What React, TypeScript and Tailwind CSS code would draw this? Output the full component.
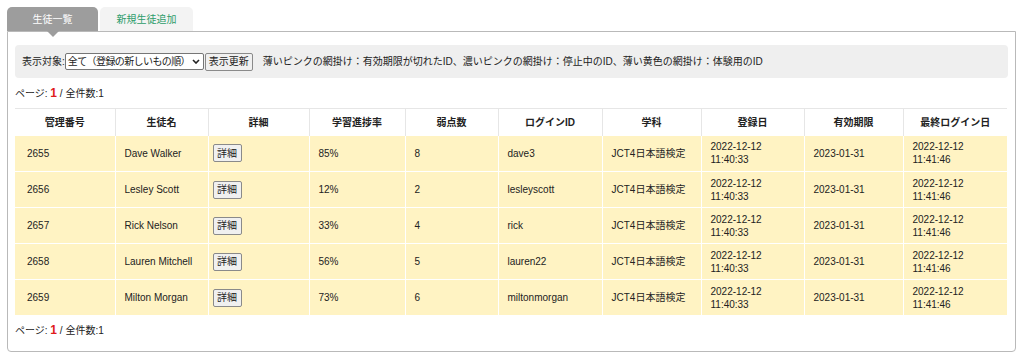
const rows = [
    {id: "2655", name: "Dave Walker", rate: "85%", weak: "8", login: "dave3"},
    {id: "2656", name: "Lesley Scott", rate: "12%", weak: "2", login: "lesleyscott"},
    {id: "2657", name: "Rick Nelson", rate: "33%", weak: "4", login: "rick"},
    {id: "2658", name: "Lauren Mitchell", rate: "56%", weak: "5", login: "lauren22"},
    {id: "2659", name: "Milton Morgan", rate: "73%", weak: "6", login: "miltonmorgan"},
];

const headers = [
    {label: "管理番号", w: "w-[100px]"},
    {label: "生徒名", w: "w-[93px]"},
    {label: "詳細", w: "w-[101px]"},
    {label: "学習進捗率", w: "w-[96px]"},
    {label: "弱点数", w: "w-[93px]"},
    {label: "ログインID", w: "w-[104px]"},
    {label: "学科", w: "w-[99px]"},
    {label: "登録日", w: "w-[103px]"},
    {label: "有効期限", w: "w-[99px]"},
    {label: "最終ログイン日", w: "w-[104px]"},
];

const Pager = () => (
    <span>
        ページ: <span className="text-[#e01b1b] font-bold text-[12px]">1</span> / 全件数:1
    </span>
);

const App = () => {
    const td = "px-[9px] whitespace-nowrap border-r border-b border-white last:border-r-0 align-middle";

    return (
        <div className="w-[1024px] h-[364px] bg-white pt-[7px] px-[7px] text-[10px] text-[#222] font-['Liberation_Sans','Noto_Sans_CJK_JP',sans-serif]">
            {/* tabs */}
            <div className="flex gap-[2px] h-[24px]">
                <div className="relative w-[91px] bg-[#9d9d9d] rounded-t-[5px] flex items-center justify-center text-white text-[10px]">
                    生徒一覧
                    <span className="absolute left-[40px] top-[24px] w-0 h-0 border-l-[6px] border-r-[6px] border-t-[6px] border-l-transparent border-r-transparent border-t-[#9d9d9d]"></span>
                </div>
                <div className="w-[93px] bg-[#f3f3f3] rounded-t-[5px] flex items-center justify-center text-[#2c9c6a] text-[10px]">
                    新規生徒追加
                </div>
            </div>

            {/* panel */}
            <div className="w-[1009px] h-[321px] border border-[#b9b9b9] rounded-b-[4px] px-[7px] pt-[13px]">
                <div className="h-[33px] bg-[#efefef] rounded-[4px] flex items-center px-[7px]">
                    <span>表示対象:</span>
                    <div className="relative h-[17px]">
                        <div className="h-[17px] w-[139px] border border-[#767676] rounded-[2px] bg-white text-[10px] pl-[2px] flex items-center tracking-[-0.6px] whitespace-nowrap overflow-hidden">
                            全て（登録の新しいもの順）
                        </div>
                        <svg className="absolute right-[4px] top-[6px] pointer-events-none" width="8" height="5" viewBox="0 0 8 5">
                            <path d="M1 1 L4 4 L7 1" fill="none" stroke="#222" strokeWidth="1.6"/>
                        </svg>
                    </div>
                    <button className="ml-[1px] h-[18px] w-[48px] border border-[#8a8a8a] rounded-[2px] bg-[#f0f0f0] text-[10px]">表示更新</button>
                    <span className="ml-[10px]">薄いピンクの網掛け：有効期限が切れたID、濃いピンクの網掛け：停止中のID、薄い黄色の網掛け：体験用のID</span>
                </div>

                <div className="h-[30px] flex items-center">
                    <Pager/>
                </div>

                <table className="table-fixed border-collapse w-[992px]">
                    <thead>
                        <tr className="h-[27px] bg-white border-t border-[#e6e6e6]">
                            {headers.map((h) => (
                                <th key={h.label} className={`${h.w} font-bold text-center border-r border-[#e6e6e6] last:border-r-0`}>
                                    {h.label}
                                </th>
                            ))}
                        </tr>
                    </thead>
                    <tbody>
                        {rows.map((r) => (
                            <tr key={r.id} className="h-[36px] bg-[#fff3c3]">
                                <td className={`${td} pl-[12px]`}>{r.id}</td>
                                <td className={td}>{r.name}</td>
                                <td className={`${td} pl-[4px]`}>
                                    <button className="h-[18px] w-[29px] border border-[#8a8a8a] rounded-[2px] bg-[#f0f0f0] text-[10px]">詳細</button>
                                </td>
                                <td className={td}>{r.rate}</td>
                                <td className={td}>{r.weak}</td>
                                <td className={td}>{r.login}</td>
                                <td className={td}>JCT4日本語検定</td>
                                <td className={`${td} leading-[13px]`}>2022-12-12<br/>11:40:33</td>
                                <td className={td}>2023-01-31</td>
                                <td className={`${td} leading-[13px]`}>2022-12-12<br/>11:41:46</td>
                            </tr>
                        ))}
                    </tbody>
                </table>

                <div className="h-[28px] flex items-center">
                    <Pager/>
                </div>
            </div>
        </div>
    );
};

export default App;
